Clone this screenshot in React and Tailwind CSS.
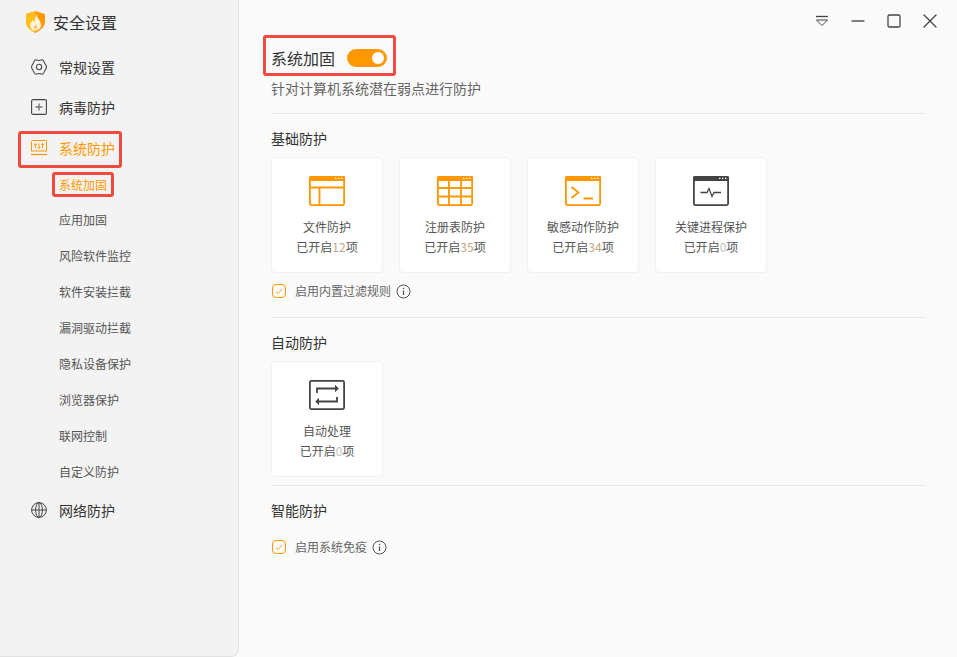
import { Minus, X, Square } from 'lucide-react';

const SUB_ITEMS = ['应用加固', '风险软件监控', '软件安装拦截', '漏洞驱动拦截', '隐私设备保护', '浏览器保护', '联网控制', '自定义防护'];

const ORANGE = '#ff9800';
const DARK = '#444444';

function Logo() {
  return (
    <svg width="19" height="22" viewBox="0 0 19 22">
      <path d="M0 3 L9.5 0 L19 3 V11 C19 16 14 19.5 9.5 22 C5 19.5 0 16 0 11 Z" fill="#ff9a0a" />
      <path d="M0 3 L9.5 0 V22 C5 19.5 0 16 0 11 Z" fill="#ffc01f" />
      <path d="M10.5 3.5 C11 7.5 15 9.5 15 14 C15 17.2 12.6 19.5 9.5 19.5 C6.4 19.5 4.2 17.2 4.2 14.4 C4.2 12 5.8 10.8 6.8 9 C7.4 10 7.8 10.6 8.4 11 C9 8.6 9.2 6 10.5 3.5 Z" fill="#fff4de" />
      <path d="M9.8 13 C10.4 14.4 11.4 15 11.4 16.4 C11.4 17.6 10.5 18.4 9.5 18.4 C8.5 18.4 7.6 17.6 7.6 16.5 C7.6 15.2 9.2 14.6 9.8 13 Z" fill="#ffc877" />
    </svg>
  );
}

function GearIcon() {
  return (
    <svg width="18" height="18" viewBox="0 0 18 18" fill="none" stroke={DARK} strokeWidth="1.2">
      <path d="M5.2 .9 C6.2 .9 6.6 1.6 9 1.6 C11.4 1.6 11.8 .9 12.8 .9 C14.2 .9 14.6 3.4 16 5.6 C16.7 6.8 17.4 7.8 17.4 9 C17.4 10.2 16.7 11.2 16 12.4 C14.6 14.6 14.2 17.1 12.8 17.1 C11.8 17.1 11.4 16.4 9 16.4 C6.6 16.4 6.2 17.1 5.2 17.1 C3.8 17.1 3.4 14.6 2 12.4 C1.3 11.2 .6 10.2 .6 9 C.6 7.8 1.3 6.8 2 5.6 C3.4 3.4 3.8 .9 5.2 .9 Z" />
      <circle cx="9" cy="9" r="3" />
    </svg>
  );
}

function PlusBoxIcon() {
  return (
    <svg width="16" height="16" viewBox="0 0 16 16" fill="none" stroke={DARK} strokeWidth="1.1">
      <rect x=".6" y=".6" width="14.8" height="14.8" rx="1.5" />
      <path d="M8 4.5 V11.5 M4.5 8 H11.5" stroke="#777" strokeWidth="1.4" />
    </svg>
  );
}

function SystemIcon() {
  return (
    <svg width="16" height="16" viewBox="0 0 16 16" fill="none" stroke={ORANGE} strokeWidth="1">
      <path d="M.5 11 V1.5 A1 1 0 0 1 1.5 .5 H14.5 A1 1 0 0 1 15.5 1.5 V11 Z" />
      <path d="M0 14.5 H16" strokeWidth="1.2" />
      <path d="M4.5 3.5 V8.5 M3.2 5 L4.5 3.5 L5.8 5 M8 3.5 V8.5 M6.7 7 L8 8.5 L9.3 7 M11.5 3.5 V8.5 M10.2 5 L11.5 3.5 L12.8 5" strokeWidth=".9" />
    </svg>
  );
}

function GlobeIcon() {
  return (
    <svg width="16" height="16" viewBox="0 0 16 16" fill="none" stroke={DARK} strokeWidth="1">
      <circle cx="8" cy="8" r="7.4" />
      <ellipse cx="8" cy="8" rx="3.4" ry="7.4" />
      <path d="M.6 8 H15.4 M8 .6 V15.4" />
    </svg>
  );
}

function WindowFrame({ color, children }) {
  return (
    <svg width="36" height="30" viewBox="0 0 36 30" fill="none" stroke={color} strokeWidth="1.8">
      <rect x=".9" y=".9" width="34.2" height="28.2" rx="1.5" />
      <rect x="0" y="0" width="36" height="5" rx="1.5" fill={color} stroke="none" />
      <path d="M26 2.4 H27.4 M29 2.4 H30.4 M32 2.4 H33.4" stroke="#fff" strokeWidth="1.1" />
      {children}
    </svg>
  );
}

const CARD_ICONS = {
  file: (
    <WindowFrame color={ORANGE}>
      <path d="M.75 11.5 H35.25 M10.5 11.5 V29" />
    </WindowFrame>
  ),
  table: (
    <WindowFrame color={ORANGE}>
      <path d="M.75 12 H35.25 M.75 20.5 H35.25 M12 4 V29 M24 4 V29" />
    </WindowFrame>
  ),
  terminal: (
    <WindowFrame color={ORANGE}>
      <path d="M6.5 11 L13.5 16.5 L6.5 22 M18.5 22.5 H28" />
    </WindowFrame>
  ),
  process: (
    <WindowFrame color={DARK}>
      <path d="M7.5 16.5 H14 L16 12.5 L19 20.5 L21 16.5 H28" strokeWidth="1.3" />
    </WindowFrame>
  ),
  auto: (
    <svg width="36" height="30" viewBox="0 0 36 30" fill="none" stroke={DARK} strokeWidth="1.8">
      <rect x=".9" y=".9" width="34.2" height="28.2" rx="1.5" />
      <path d="M8 13 V8.5 H28" />
      <path d="M26 5 L29.5 8.5 L26 12" fill={DARK} strokeWidth=".5" />
      <path d="M28 17 V21.5 H8" />
      <path d="M10 18 L6.5 21.5 L10 25" fill={DARK} strokeWidth=".5" />
    </svg>
  ),
};

function NavItem({ icon, label }) {
  return (
    <div className="flex items-center h-10 pl-[31px] text-[14px] text-[#333333]">
      <span className="w-4 flex justify-center">{icon}</span>
      <span className="ml-3">{label}</span>
    </div>
  );
}

function ProtectCard({ icon, title, count, active }) {
  return (
    <div className="w-[112px] h-[116px] bg-white border border-[#f0f0f0] rounded flex flex-col items-center pt-[18px]">
      {CARD_ICONS[icon]}
      <div className="mt-[11px] text-[12px] leading-5 text-[#555555]">{title}</div>
      <div className="text-[12px] leading-5 text-[#555555]">
        已开启<span className={active ? 'text-[#c4a484]' : 'text-[#c4c4c4]'}>{count}</span>项
      </div>
    </div>
  );
}

function CheckRow({ label }) {
  return (
    <div className="flex items-center h-5 pl-px text-[12px] text-[#666666]">
      <span className="w-[14px] h-[14px] border border-[#ff9800] rounded-sm flex items-center justify-center">
        <svg width="8" height="7" viewBox="0 0 8 7" fill="none" stroke="#ffa726" strokeWidth="1">
          <path d="M1 3.5 L3.2 5.6 L7 1" />
        </svg>
      </span>
      <span className="ml-[8px] pl-px">{label}</span>
      <svg className="ml-[5px]" width="15" height="15" viewBox="0 0 15 15" fill="none" stroke="#555" strokeWidth="1">
        <circle cx="7.5" cy="7.5" r="6.5" />
        <path d="M7.5 6.5 V11" strokeWidth="1.3" />
        <path d="M7.5 3.8 V5" strokeWidth="1.3" />
      </svg>
    </div>
  );
}

function WinButton({ children }) {
  return <div className="w-9 h-9 flex items-center justify-center">{children}</div>;
}

export default function App() {
  return (
    <div
      className="w-[957px] h-[657px] flex bg-[#fafafa] overflow-hidden"
      style={{ fontFamily: '"Noto Sans CJK SC", "Noto Sans", sans-serif' }}
    >
      <aside className="w-[239px] h-full shrink-0 bg-[#f3f3f3] border-r border-b border-[#e2e2e2] rounded-br-lg">
        <div className="flex items-center h-[47px] pl-[26px] pb-[3px]">
          <Logo />
          <span className="ml-[8px] text-[16px] text-[#333333]">安全设置</span>
        </div>
        <NavItem icon={<GearIcon />} label="常规设置" />
        <NavItem icon={<PlusBoxIcon />} label="病毒防护" />
        <div className="ml-[18px] mt-[4px] w-[104px] h-[37px] border-[3px] border-[#ef4c3f] rounded-[3px] flex items-center pl-[10px] pb-[3px] text-[14px] text-[#ff9800]">
          <SystemIcon />
          <span className="ml-3">系统防护</span>
        </div>
        <div className="ml-[52px] mt-[4px] w-[62px] h-[25px] border-[3px] border-[#ef4c3f] rounded-[3px] flex items-center pl-[4px] text-[12px] text-[#ff9800]">
          系统加固
        </div>
        <div className="mt-[5px]">
          {SUB_ITEMS.map((item) => (
            <div key={item} className="h-9 pl-[59px] flex items-center text-[12px] text-[#555555]">{item}</div>
          ))}
        </div>
        <NavItem icon={<GlobeIcon />} label="网络防护" />
      </aside>

      <main className="flex-1 relative pl-[32px] pr-[31px]">
        <div className="absolute top-[3px] right-[9px] flex items-center text-[#444444]">
          <WinButton>
            <svg width="14" height="12" viewBox="0 0 14 12" fill="none" stroke="#444" strokeWidth="1">
              <path d="M1 1.5 H13" strokeWidth="1.3" />
              <path d="M1.5 5 H12.5 L7 10.5 Z" />
            </svg>
          </WinButton>
          <WinButton><Minus size={20} strokeWidth={1.8} color="#555" /></WinButton>
          <WinButton><Square size={16} strokeWidth={1.9} /></WinButton>
          <WinButton><X size={24} strokeWidth={1.3} /></WinButton>
        </div>

        <div className="pt-[35px]">
          <div className="-ml-[8px] w-[133px] h-[41px] border-[3px] border-[#ef4c3f] rounded-[3px] flex items-center pl-[5px] pt-[5px]">
            <span className="text-[16px] text-[#333333]">系统加固</span>
            <span className="ml-3 w-10 h-[18px] rounded-full bg-[#ff9800] flex items-center justify-end pr-[3px]">
              <span className="w-3 h-3 rounded-full bg-white" />
            </span>
          </div>
          <div className="mt-[2px] h-5 leading-5 text-[14px] text-[#666666]">针对计算机系统潜在弱点进行防护</div>
          <div className="mt-[15px] border-t border-[#e8e8e8]" />
        </div>

        <div className="mt-[14px] h-5 leading-5 text-[14px] text-[#333333]">基础防护</div>
        <div className="mt-[9px] flex gap-4">
          <ProtectCard icon="file" title="文件防护" count="12" active />
          <ProtectCard icon="table" title="注册表防护" count="35" active />
          <ProtectCard icon="terminal" title="敏感动作防护" count="34" active />
          <ProtectCard icon="process" title="关键进程保护" count="0" />
        </div>
        <div className="mt-2">
          <CheckRow label="启用内置过滤规则" />
        </div>
        <div className="mt-4 border-t border-[#e8e8e8]" />

        <div className="mt-[14px] h-5 leading-5 text-[14px] text-[#333333]">自动防护</div>
        <div className="mt-[9px]">
          <ProtectCard icon="auto" title="自动处理" count="0" />
        </div>
        <div className="mt-2 border-t border-[#e8e8e8]" />

        <div className="mt-[14px] h-5 leading-5 text-[14px] text-[#333333]">智能防护</div>
        <div className="mt-[17px]">
          <CheckRow label="启用系统免疫" />
        </div>
      </main>
    </div>
  );
}
